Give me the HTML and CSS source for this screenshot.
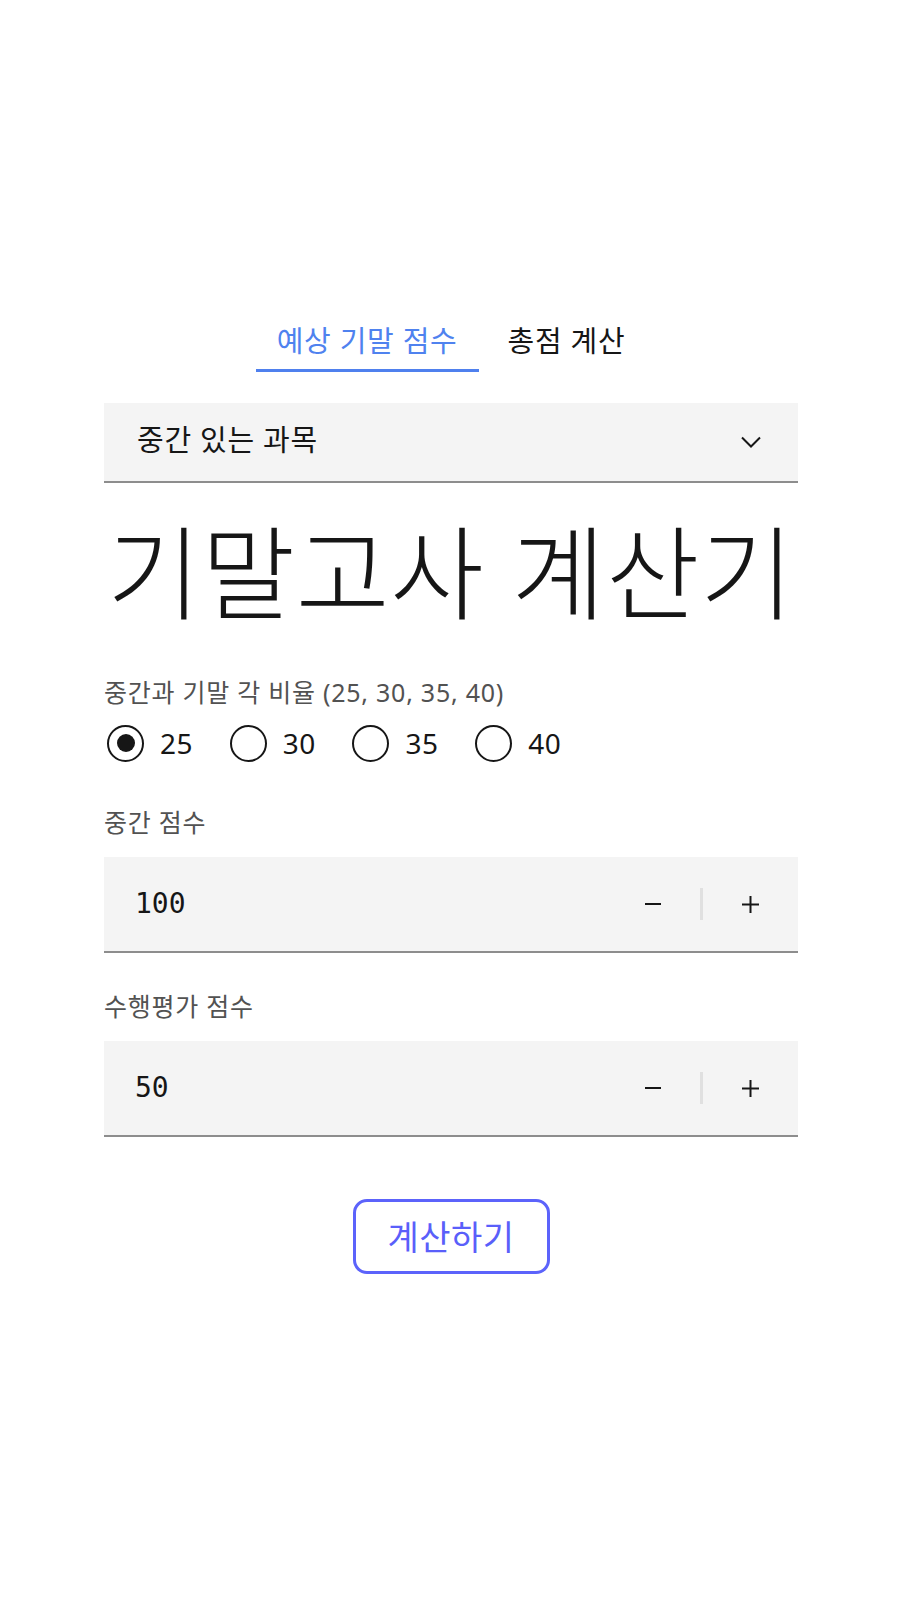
FILE: index.html
```html
<!DOCTYPE html>
<html lang="ko">
<head>
<meta charset="utf-8">
<title>기말고사 계산기</title>
<link rel="stylesheet" href="styles.css">
</head>
<body>
<main class="app">
  <nav class="tabs">
    <button class="tab tab-active" type="button">예상 기말 점수</button>
    <button class="tab" type="button">총점 계산</button>
  </nav>

  <div class="dropdown">
    <span class="dropdown-text">중간 있는 과목</span>
    <svg class="chevron" width="20" height="12" viewBox="0 0 20 12" aria-hidden="true">
      <polyline points="1,1.5 10,10.5 19,1.5" fill="none" stroke="#161616" stroke-width="2"/>
    </svg>
  </div>

  <h1 class="title">기말고사 계산기</h1>

  <section class="field field-ratio">
    <div class="label">중간과 기말 각 비율 (25, 30, 35, 40)</div>
    <div class="radios">
      <label class="radio"><span class="circle checked"></span><span class="radio-text">25</span></label>
      <label class="radio"><span class="circle"></span><span class="radio-text">30</span></label>
      <label class="radio"><span class="circle"></span><span class="radio-text">35</span></label>
      <label class="radio"><span class="circle"></span><span class="radio-text">40</span></label>
    </div>
  </section>

  <section class="field field-mid">
    <div class="label">중간 점수</div>
    <div class="number">
      <span class="number-value">100</span>
      <div class="controls">
        <button class="step" type="button" aria-label="감소">
          <svg width="16" height="16" viewBox="0 0 16 16"><line x1="0" y1="8" x2="16" y2="8" stroke="#161616" stroke-width="2"/></svg>
        </button>
        <span class="divider"></span>
        <button class="step" type="button" aria-label="증가">
          <svg width="17" height="17" viewBox="0 0 17 17"><line x1="0" y1="8.5" x2="17" y2="8.5" stroke="#161616" stroke-width="2"/><line x1="8.5" y1="0" x2="8.5" y2="17" stroke="#161616" stroke-width="2"/></svg>
        </button>
      </div>
    </div>
  </section>

  <section class="field field-perf">
    <div class="label">수행평가 점수</div>
    <div class="number">
      <span class="number-value">50</span>
      <div class="controls">
        <button class="step" type="button" aria-label="감소">
          <svg width="16" height="16" viewBox="0 0 16 16"><line x1="0" y1="8" x2="16" y2="8" stroke="#161616" stroke-width="2"/></svg>
        </button>
        <span class="divider"></span>
        <button class="step" type="button" aria-label="증가">
          <svg width="17" height="17" viewBox="0 0 17 17"><line x1="0" y1="8.5" x2="17" y2="8.5" stroke="#161616" stroke-width="2"/><line x1="8.5" y1="0" x2="8.5" y2="17" stroke="#161616" stroke-width="2"/></svg>
        </button>
      </div>
    </div>
  </section>

  <div class="actions">
    <button class="calc" type="button">계산하기</button>
  </div>
</main>
</body>
</html>
```

FILE: styles.css
```css
* { box-sizing: border-box; }

html, body {
  margin: 0;
  padding: 0;
  background: #ffffff;
}

body {
  font-family: "Noto Sans", "Noto Sans CJK KR", sans-serif;
  color: #161616;
}

.app {
  width: 694px;
  margin: 0 auto;
  padding-top: 319px;
  padding-bottom: 200px;
}

/* Tabs */
.tabs {
  display: flex;
  justify-content: center;
  gap: 8px;
}

.tab {
  font-family: "Noto Sans", "Noto Sans CJK KR", sans-serif;
  font-size: 29px;
  line-height: 40px;
  letter-spacing: 0.7px;
  color: #161616;
  background: none;
  border: none;
  border-bottom: 3px solid transparent;
  padding: 2px 21px 8px;
  margin: 0;
  cursor: pointer;
}

.tab-active {
  color: #4f82ef;
  border-bottom-color: #4f80ee;
}

/* Dropdown */
.dropdown {
  margin-top: 31px;
  height: 80px;
  background: #f4f4f4;
  border-bottom: 2px solid #8d8d8d;
  display: flex;
  align-items: center;
  justify-content: space-between;
  padding: 0 37px 0 33px;
}

.dropdown-text {
  font-size: 29px;
  letter-spacing: 0.7px;
  line-height: 40px;
  margin-top: -4px;
}

.chevron { display: block; }

/* Title */
.title {
  margin: 30px 0 0;
  padding-left: 3px;
  font-size: 102px;
  font-weight: 300;
  line-height: 120px;
  letter-spacing: 0.5px;
  color: #161616;
  white-space: nowrap;
}

/* Fields */
.field { margin: 0; }

.field-ratio { margin-top: 43px; }
.field-mid { margin-top: 43px; }
.field-perf { margin-top: 37px; }

.label {
  font-size: 25px;
  line-height: 32px;
  letter-spacing: 0.75px;
  color: #525252;
}

/* Radios */
.radios {
  display: flex;
  align-items: center;
  gap: 33.5px;
  margin-top: 15px;
  height: 40px;
}

.radio {
  display: flex;
  align-items: center;
  gap: 16px;
  padding-left: 3px;
}

.circle {
  width: 37px;
  height: 37px;
  border: 2px solid #161616;
  border-radius: 50%;
  display: flex;
  align-items: center;
  justify-content: center;
}

.circle.checked::after {
  content: "";
  width: 18px;
  height: 18px;
  border-radius: 50%;
  background: #161616;
}

.radio-text {
  font-size: 28px;
  line-height: 40px;
  letter-spacing: 0.6px;
  color: #161616;
}

/* Number input */
.number {
  margin-top: 19px;
  height: 96px;
  background: #f4f4f4;
  border-bottom: 2px solid #8d8d8d;
  display: flex;
  align-items: center;
  justify-content: space-between;
}

.number-value {
  font-family: "DejaVu Sans Mono", "Liberation Mono", monospace;
  font-size: 28px;
  line-height: 40px;
  padding-left: 31px;
  color: #161616;
}

.controls {
  display: flex;
  align-items: center;
  height: 100%;
}

.step {
  width: 95px;
  height: 100%;
  background: none;
  border: none;
  padding: 0;
  display: flex;
  align-items: center;
  justify-content: center;
  cursor: pointer;
}

.step svg { display: block; }

.divider {
  width: 3px;
  height: 32px;
  background: #e0e0e0;
}

/* Button */
.actions {
  display: flex;
  justify-content: center;
  margin-top: 62px;
}

.calc {
  width: 197px;
  height: 75px;
  border: 3px solid #5c63fb;
  border-radius: 14px;
  background: #ffffff;
  color: #5a5ffa;
  font-family: "Noto Sans", "Noto Sans CJK KR", sans-serif;
  font-size: 34px;
  line-height: 40px;
  letter-spacing: 0.5px;
  padding: 0;
  cursor: pointer;
}
```
